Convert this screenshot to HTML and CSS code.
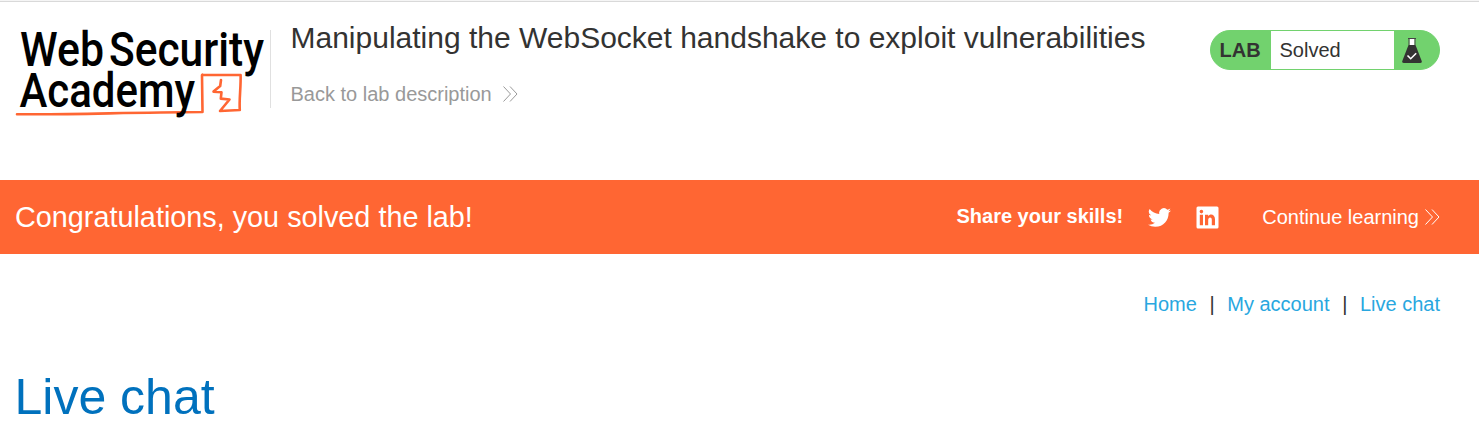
FILE: index.html
```html
<!DOCTYPE html>
<html lang="en">
<head>
<meta charset="utf-8">
<title>Manipulating the WebSocket handshake to exploit vulnerabilities</title>
<link rel="stylesheet" href="styles.css">
</head>
<body>
<header class="header">
  <svg class="logo" width="256" height="92" viewBox="14 28 256 92" role="img" aria-label="Web Security Academy">
    <path class="logo-line" d="M17 114.200C70 115 120 112.500 202.500 112L202 75.500Q202 74.500 203 74.700L240.600 75C241 88 239 99 239.800 110L220 111L229.500 99.500L220.800 98.600L221.500 92.200L213.500 91.600L220.200 86L221 80"/>
    <g class="logo-text">
      <text x="20" y="66" textLength="84" lengthAdjust="spacingAndGlyphs">Web</text>
      <text x="109" y="66" textLength="155" lengthAdjust="spacingAndGlyphs">Security</text>
      <text x="19.500" y="107" textLength="175.500" lengthAdjust="spacingAndGlyphs">Academy</text>
    </g>
  </svg>
  <div class="title-box">
    <h2 class="title">Manipulating the WebSocket handshake to exploit vulnerabilities</h2>
    <a class="back">Back to lab description
      <svg class="chevrons" width="15" height="16" viewBox="0 0 15 16"><path d="M.5.5L7.500 8L.5 15.500M7 .5L14 8L7 15.500"/></svg>
    </a>
  </div>
  <div class="status">
    <span class="status-lab">LAB</span>
    <span class="status-text">Solved</span>
    <span class="status-icon">
      <svg width="20" height="26" viewBox="0 0 20 26">
        <path fill="#fff" d="M7.500 1h5v6.500h-5z"/>
        <path fill="none" stroke="#444" d="M6 .5h8M7 1v6M13 1v6"/>
        <path fill="#333332" d="M6.500 7h7L19.700 23Q20.300 25 18 25H2Q-.3 25 .3 23z"/>
        <path fill="none" stroke="#fff" stroke-width="1.600" d="M5.500 17.500l3.200 3.200 5.500-5.500"/>
      </svg>
    </span>
  </div>
</header>
<section class="banner">
  <h4 class="congrats">Congratulations, you solved the lab!</h4>
  <div class="share">
    <span class="share-label">Share your skills!</span>
    <svg class="twitter" width="23" height="21" viewBox="0 1.800 24 20.400"><path fill="#fff" d="M24 4.600a10 10 0 0 1-2.800.8 4.900 4.900 0 0 0 2.100-2.700 9.900 9.900 0 0 1-3.100 1.200 4.900 4.900 0 0 0-8.400 4.500A14 14 0 0 1 1.700 3.100a4.900 4.900 0 0 0 1.500 6.600 4.900 4.900 0 0 1-2.200-.6v.1a4.900 4.900 0 0 0 3.900 4.800 5 5 0 0 1-2.200.1 4.900 4.900 0 0 0 4.600 3.400A9.900 9.900 0 0 1 0 19.500a14 14 0 0 0 7.500 2.200c9.100 0 14-7.500 14-14v-.6A10 10 0 0 0 24 4.600z"/></svg>
    <svg class="linkedin" width="23" height="23" viewBox="0 0 23 23"><path fill="#fff" fill-rule="evenodd" d="M2 .5h19q1.500 0 1.500 1.500v19q0 1.500-1.500 1.500H2Q.5 22.500.5 21V2Q.5.5 2 .5zM3.800 8.800v10.500H7V8.800zM5.400 3.800a1.800 1.800 0 1 0 .01 3.600 1.800 1.800 0 0 0-.01-3.600zM9 8.800v10.500h3.200v-5.300c0-3.400 3.600-3.400 3.600-.2v5.500H19v-6c0-5.300-4.900-6-6.900-3.200V8.800z"/></svg>
  </div>
  <a class="continue">Continue learning
    <svg class="chevrons" width="15" height="16" viewBox="0 0 15 16"><path d="M.5.5L7.500 8L.5 15.500M7 .5L14 8L7 15.500"/></svg>
  </a>
</section>
<nav class="nav"><a>Home</a><span>|</span><a>My account</a><span>|</span><a>Live chat</a></nav>
<h1 class="heading">Live chat</h1>
</body>
</html>
```
FILE: styles.css
```css
* { box-sizing: border-box; }
body { margin: 0; height: 437px; overflow: hidden; background: #fff; color: #333332; font: 20px/24px "Liberation Sans", Arial, sans-serif; border-top: 1px solid #f5f5f5; }
h1, h2, h4 { margin: 0; font-weight: 400; }
.header { height: 179px; border-top: 1px solid #d9d9d9; display: flex; align-items: flex-start; padding: 28px 39px 0 14px; }
.logo { flex: none; margin-top: -2px; overflow: visible; }
.logo-line { fill: none; stroke: #ff6633; stroke-width: 2.6; stroke-linejoin: round; stroke-linecap: round; }
.logo-text { font: 500 48px Roboto, sans-serif; }
.title-box { border-left: 1px solid #e0e0e0; height: 78px; padding-left: 19.5px; flex: 1; }
.title { font-size: 30px; line-height: 36px; margin-top: -10px; white-space: nowrap; }
.back { display: flex; align-items: center; gap: 11px; margin-top: 26px; color: #999; }
.chevrons { fill: none; stroke: currentColor; stroke-width: 1; }
.status { width: 230px; height: 40px; display: flex; border: 1px solid #72d26e; border-radius: 20px; background: #72d26e; overflow: hidden; line-height: 38px; }
.status-lab { width: 60px; padding-left: 8.5px; font-weight: 700; }
.status-text { width: 123px; padding-left: 8.5px; background: #fff; }
.status-icon { padding: 7px 0 0 8px; line-height: 0; }
.banner { height: 74px; padding: 0 39px 0 15px; background: #ff6633; color: #fff; display: flex; align-items: center; }
.congrats { font-size: 28.8px; flex: 1; }
.share { display: flex; align-items: center; margin-right: 43px; }
.share-label { font-weight: 700; position: relative; top: -1px; }
.twitter { margin: 0 25px; }
.continue { display: flex; align-items: center; gap: 6px; }
.nav { display: flex; justify-content: flex-end; gap: 12.6px; padding: 38px 39px 0 0; color: #333; }
.nav a { color: #29a7df; }
.heading { margin: 51px 0 0 14.5px; font-size: 50px; line-height: 60px; color: #0071bd; }
```
